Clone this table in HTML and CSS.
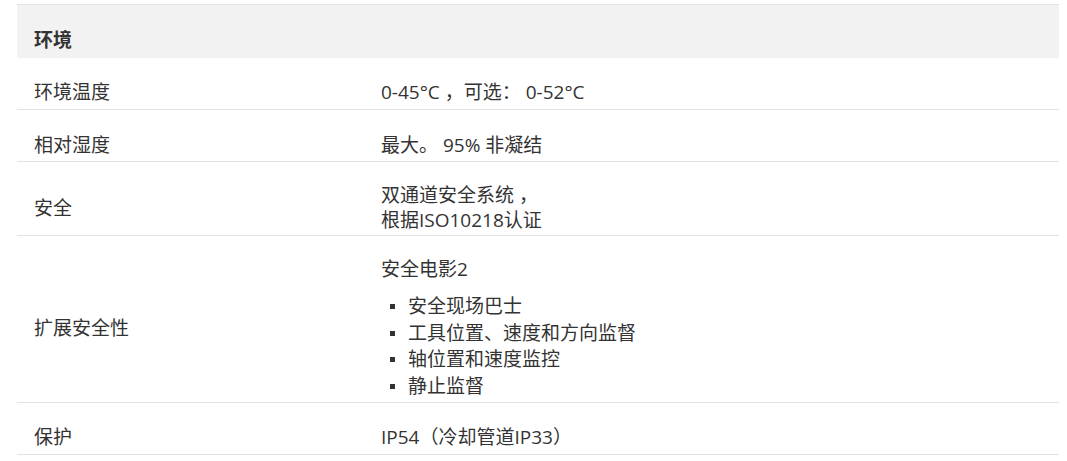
FILE: index.html
```html
<!DOCTYPE html>
<html lang="zh-CN">
<head>
<meta charset="utf-8">
<link rel="stylesheet" href="styles.css">
</head>
<body>
<div class="wrap">
  <table class="spec">
    <thead>
      <tr class="head"><th colspan="2">环境</th></tr>
    </thead>
    <tbody>
      <tr class="row"><td class="label">环境温度</td><td class="value">0-45°C ，可选： 0-52°C</td></tr>
      <tr class="row"><td class="label">相对湿度</td><td class="value">最大。 95% 非凝结</td></tr>
      <tr class="row"><td class="label">安全</td><td class="value">双通道安全系统 ，<br>根据ISO10218认证</td></tr>
      <tr class="row tall"><td class="label">扩展安全性</td><td class="value">
        <p class="lead">安全电影2</p>
        <ul class="bullets">
          <li>安全现场巴士</li>
          <li>工具位置、速度和方向监督</li>
          <li>轴位置和速度监控</li>
          <li>静止监督</li>
        </ul>
      </td></tr>
      <tr class="row"><td class="label">保护</td><td class="value">IP54（冷却管道IP33）</td></tr>
    </tbody>
  </table>
</div>
</body>
</html>
```
FILE: styles.css
```css
html, body {
  margin: 0;
  padding: 0;
  background: #fff;
}
body {
  font-family: "Open Sans", "Noto Sans CJK SC", sans-serif;
  font-size: 19px;
  color: #333;
}
.wrap {
  padding: 4px 8px 0 17px;
}
.spec {
  width: 1042px;
  border-collapse: collapse;
  border-top: 1px solid #e2e2e2;
}
.head th {
  background: #f2f2f2;
  text-align: left;
  font-weight: bold;
  height: 53px;
  box-sizing: border-box;
  padding: 23px 17px 4px;
  line-height: 25px;
  vertical-align: middle;
}
.row td {
  border-bottom: 1px solid #e2e2e2;
  height: 52px;
  box-sizing: border-box;
  padding: 21px 17px 2px;
  line-height: 25px;
  vertical-align: middle;
}
.row .label {
  width: 347px;
}
.row.tall td {
  padding-bottom: 2px;
}
.lead {
  margin: 0;
}
.bullets {
  list-style: none;
  margin: 11px 0 0;
  padding: 0;
}
.bullets li {
  position: relative;
  padding-left: 27px;
  line-height: 26.7px;
}
.bullets li::before {
  content: "";
  position: absolute;
  left: 9px;
  top: 11px;
  width: 5px;
  height: 5px;
  background: #333;
}
```
